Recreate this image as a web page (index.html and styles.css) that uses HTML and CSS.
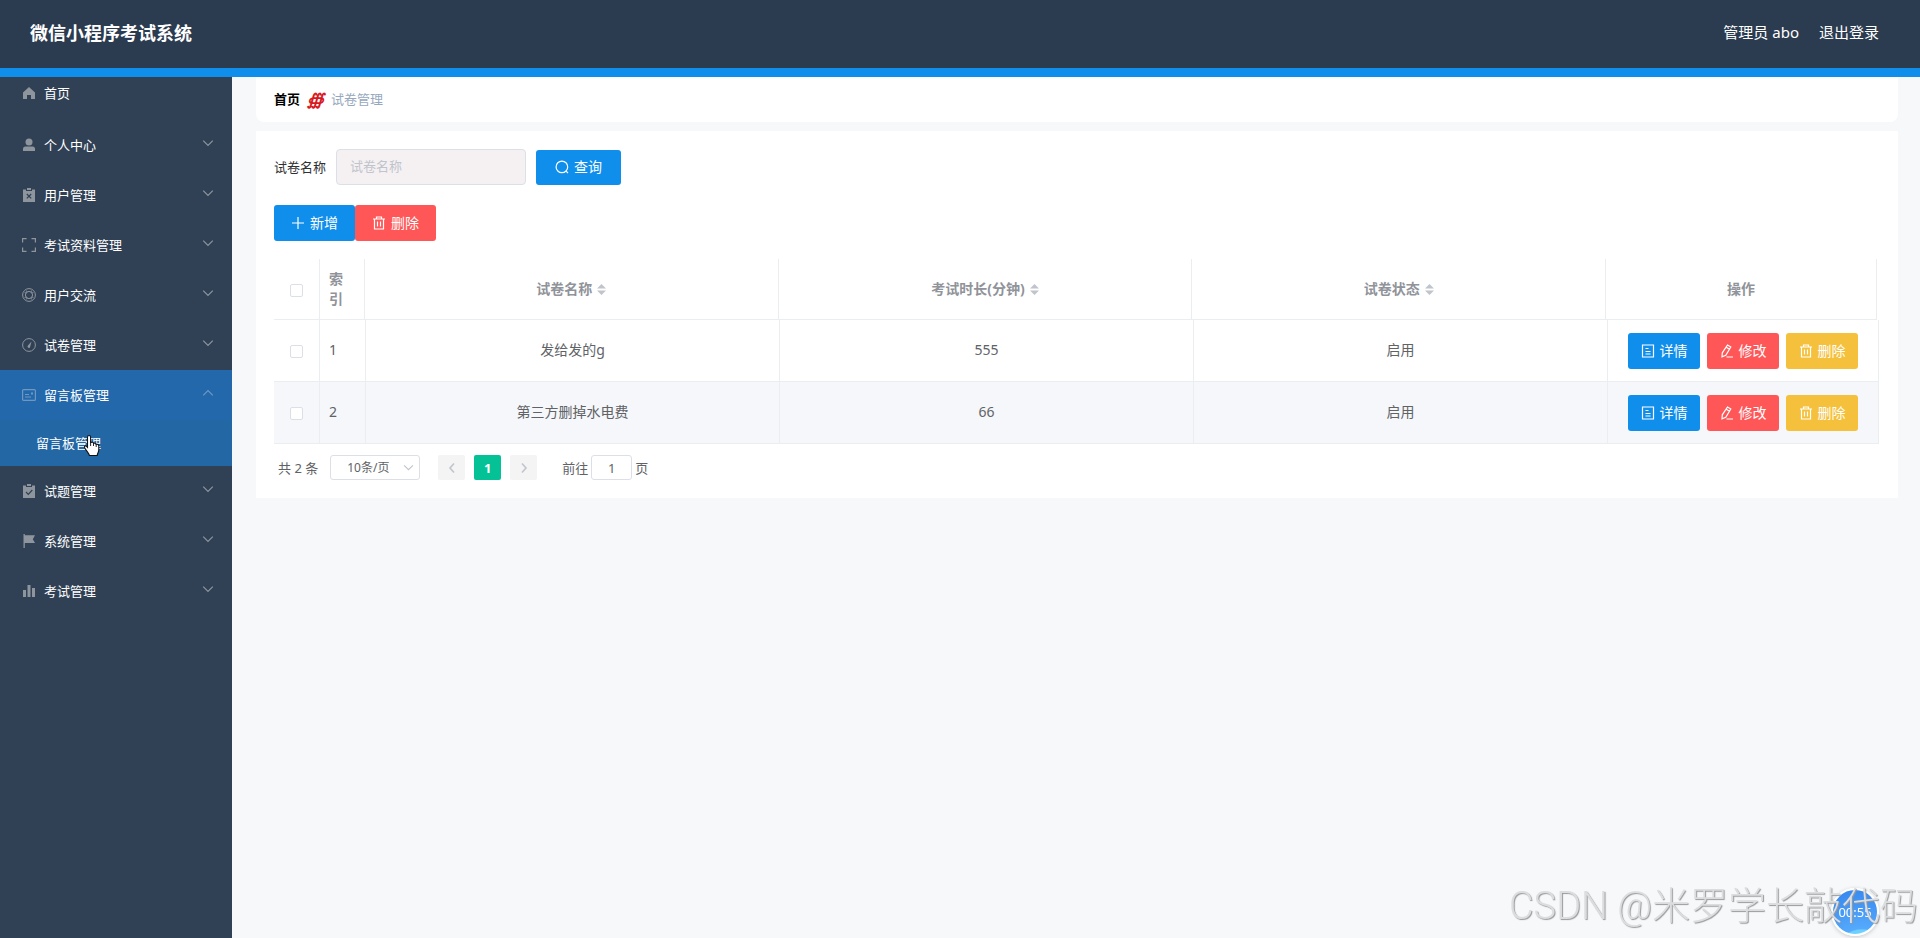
FILE: index.html
```html
<!DOCTYPE html>
<html lang="zh-CN">
<head>
<meta charset="utf-8">
<title>微信小程序考试系统</title>
<link rel="stylesheet" href="styles.css">
</head>
<body>
<svg class="sprite" aria-hidden="true">
  <symbol id="down" viewBox="0 0 10 10"><path d="M1 3l4 4 4-4" fill="none" stroke="currentColor"/></symbol>
  <symbol id="up" viewBox="0 0 10 10"><path d="M1 7l4-4 4 4" fill="none" stroke="currentColor"/></symbol>
  <symbol id="trash" viewBox="0 0 14 14"><path d="M1 3h12M4.500 3V1h5v2M2.500 3v10h9V3M5.500 5.500v5M8.500 5.500v5" fill="none" stroke="currentColor" stroke-width="1.200"/></symbol>
  <symbol id="doc" viewBox="0 0 14 14"><path d="M1.500 1h11v12h-11zM4.500 4.500h3M4.500 7.500h5M4.500 10h5" fill="none" stroke="currentColor" stroke-width="1.200"/></symbol>
  <symbol id="edit" viewBox="0 0 14 14"><path d="M7.500 1l3.300 2-5 8.300-3.800 1.500.3-4zM6.300 3.200l3.200 2M6.500 13H13" fill="none" stroke="currentColor" stroke-width="1.200"/></symbol>
</svg>
<header class="topbar">
  <h1 class="brand">微信小程序考试系统</h1>
  <div class="account"><span>管理员 abo</span><a class="logout" href="#">退出登录</a></div>
</header>
<div class="layout">
  <nav class="sidebar">
    <a class="item home" href="#"><svg class="ico" viewBox="0 0 14 14"><path d="M7 1l6 5.500V13H9V9H5v4H1V6.500z" fill="currentColor"/></svg><span>首页</span></a>
    <a class="item" href="#"><svg class="ico" viewBox="0 0 14 14"><circle cx="7" cy="4" r="3.500" fill="currentColor"/><path d="M1 13v-2q0-2.500 2.500-2.500h7Q13 8.500 13 11v2z" fill="currentColor"/></svg><span>个人中心</span><svg class="arrow"><use href="#down"/></svg></a>
    <a class="item" href="#"><svg class="ico" viewBox="0 0 14 14"><path d="M1 1.500h3V3h6V1.500h3V14H1zM5 0h4v2H5z" fill="currentColor"/><path d="M4.800 6l4.400 4.400M9.200 6l-4.400 4.400" stroke="#304156" stroke-width="1.200"/></svg><span>用户管理</span><svg class="arrow"><use href="#down"/></svg></a>
    <a class="item" href="#"><svg class="ico" viewBox="0 0 14 14"><path d="M.6 4.500V.6h4M9.500.6h3.900v3.900M13.400 9.500v3.900H9.500M4.500 13.400H.6V9.500" fill="none" stroke="currentColor" stroke-width="1.200"/></svg><span>考试资料管理</span><svg class="arrow"><use href="#down"/></svg></a>
    <a class="item" href="#"><svg class="ico" viewBox="0 0 14 14"><g fill="none" stroke="currentColor"><circle cx="7" cy="7" r="6.400"/><circle cx="7" cy="7" r="3.600"/><path d="M2.500 4.500l2 .5M4.500 2.500l.5 2M11.500 4.500l-2 .5M9.500 2.500l-.5 2M2.500 9.500l2-.5M4.500 11.500l.5-2M11.500 9.500l-2-.5M9.500 11.500l-.5-2" stroke-width=".8"/></g></svg><span>用户交流</span><svg class="arrow"><use href="#down"/></svg></a>
    <a class="item" href="#"><svg class="ico" viewBox="0 0 14 14"><circle cx="7" cy="7" r="6.400" fill="none" stroke="currentColor"/><path d="M9.500 3.500L8.200 8.600a1.300 1.300 0 1 1-2.200-1z" fill="currentColor"/></svg><span>试卷管理</span><svg class="arrow"><use href="#down"/></svg></a>
    <div class="open">
      <a class="item" href="#"><svg class="ico" viewBox="0 0 14 14"><rect x=".6" y="1.600" width="12.800" height="10.800" rx="1" fill="none" stroke="currentColor" stroke-width="1.200"/><path d="M3 6.500h4M3 9h6" stroke="currentColor"/><rect x="9" y="4.500" width="2" height="2" fill="currentColor"/></svg><span>留言板管理</span><svg class="arrow"><use href="#up"/></svg></a>
      <a class="subitem" href="#">留言板管理</a>
      <svg class="cursor" viewBox="0 0 17 23"><path d="M6 1.500c1.100 0 1.600.8 1.600 1.700v5.300c2-.8 2.800 0 3 .8 1.500-.5 2.300.1 2.500 1 1.700-.4 2.700.4 2.700 1.800v4c0 2-1.600 3.200-1.600 5.400H6.400c-.4-2.200-3-4.500-4.800-7.800-.7-1.500 1-2.400 2-1.300l.9 1V3.200c0-1 .5-1.700 1.500-1.700z" fill="#fff" stroke="#111" stroke-width="1.100"/><path d="M7.600 8v4M10.500 9v3M13.200 10v3" stroke="#111" stroke-width=".9"/></svg>
    </div>
    <a class="item" href="#"><svg class="ico" viewBox="0 0 14 14"><path d="M1 1.500h3V3h6V1.500h3V14H1zM5 0h4v2H5z" fill="currentColor"/><path d="M4 8l2.300 2.300L10.300 6" fill="none" stroke="#304156" stroke-width="1.200"/></svg><span>试题管理</span><svg class="arrow"><use href="#down"/></svg></a>
    <a class="item" href="#"><svg class="ico" viewBox="0 0 14 14"><path d="M1.500 0h1.300v1.300H13L10.800 5.200 13 9H2.800v5H1.500z" fill="currentColor"/></svg><span>系统管理</span><svg class="arrow"><use href="#down"/></svg></a>
    <a class="item" href="#"><svg class="ico" viewBox="0 0 14 14"><path d="M1 6h3v7H1zM5.500 1h3v12h-3zM10 4h3v9h-3z" fill="currentColor"/></svg><span>考试管理</span><svg class="arrow"><use href="#down"/></svg></a>
  </nav>
  <main class="content">
    <div class="crumbs"><a class="crumb" href="#">首页</a><span class="sep">∰</span><span class="here">试卷管理</span></div>
    <section class="card">
      <form class="search">
        <label for="paper">试卷名称</label>
        <input id="paper" class="field" type="text" placeholder="试卷名称">
        <button class="btn query" type="button"><svg class="bico" viewBox="0 0 14 14"><path d="M10.600 10.600L13 13M12.700 6.900a5.800 5.800 0 1 1-11.600 0 5.800 5.800 0 0 1 11.600 0z" fill="none" stroke="currentColor" stroke-width="1.200"/></svg>查询</button>
      </form>
      <div class="tools">
        <button class="btn add" type="button"><svg class="bico" viewBox="0 0 14 14"><path d="M1 7h12M7 1v12" stroke="currentColor" stroke-width="1.200"/></svg>新增</button>
        <button class="btn add red" type="button"><svg class="bico"><use href="#trash"/></svg>删除</button>
      </div>
      <table class="grid head">
        <colgroup><col class="c-check"><col class="c-index"><col><col><col><col class="c-ops"></colgroup>
        <thead><tr>
          <th><input class="tick" type="checkbox" aria-label="全选"></th>
          <th class="idx">索引</th>
          <th>试卷名称<svg class="sort" viewBox="0 0 10 14"><path d="M5 1l5 5H0zM0 8h10l-5 5z" fill="currentColor"/></svg></th>
          <th>考试时长(分钟)<svg class="sort" viewBox="0 0 10 14"><path d="M5 1l5 5H0zM0 8h10l-5 5z" fill="currentColor"/></svg></th>
          <th>试卷状态<svg class="sort" viewBox="0 0 10 14"><path d="M5 1l5 5H0zM0 8h10l-5 5z" fill="currentColor"/></svg></th>
          <th>操作</th>
        </tr></thead>
      </table>
      <table class="grid body">
        <colgroup><col class="c-check"><col class="c-index"><col><col><col><col class="c-ops"></colgroup>
        <tbody>
          <tr><td class="pick"><input class="tick" type="checkbox" aria-label="选择 1"></td><td class="idx">1</td><td>发给发的g</td><td>555</td><td>启用</td>
            <td class="act"><div class="ops"><button class="btn" type="button"><svg class="bico"><use href="#doc"/></svg>详情</button><button class="btn red" type="button"><svg class="bico"><use href="#edit"/></svg>修改</button><button class="btn amber" type="button"><svg class="bico"><use href="#trash"/></svg>删除</button></div></td></tr>
          <tr class="striped"><td class="pick"><input class="tick" type="checkbox" aria-label="选择 2"></td><td class="idx">2</td><td>第三方删掉水电费</td><td>66</td><td>启用</td>
            <td class="act"><div class="ops"><button class="btn" type="button"><svg class="bico"><use href="#doc"/></svg>详情</button><button class="btn red" type="button"><svg class="bico"><use href="#edit"/></svg>修改</button><button class="btn amber" type="button"><svg class="bico"><use href="#trash"/></svg>删除</button></div></td></tr>
        </tbody>
      </table>
      <div class="pager">
        <span>共 2 条</span>
        <span class="sizes"><select class="size" aria-label="每页条数"><option>10条/页</option></select><svg class="caret"><use href="#down"/></svg></span>
        <div class="pages">
          <button class="page" type="button" aria-label="上一页" disabled><svg viewBox="0 0 10 12"><path d="M7 1.500L3 6l4 4.500" fill="none" stroke="currentColor" stroke-width="1.600"/></svg></button>
          <button class="page current" type="button">1</button>
          <button class="page" type="button" aria-label="下一页" disabled><svg viewBox="0 0 10 12"><path d="M3 1.500L7 6l-4 4.500" fill="none" stroke="currentColor" stroke-width="1.600"/></svg></button>
        </div>
        <label class="jump">前往<input class="goto" type="text" value="1">页</label>
      </div>
    </section>
  </main>
</div>
<div class="timer">00:55</div>
<div class="watermark">CSDN @米罗学长敲代码</div>
</body>
</html>
```
FILE: styles.css
```css
* { box-sizing: border-box; }
body {
  margin: 0;
  min-height: 100vh;
  display: flex;
  flex-direction: column;
  background: #f6f8fa;
  color: #606266;
  font: 14px/20px "Noto Sans", "Noto Sans CJK SC", sans-serif;
}
a { color: inherit; text-decoration: none; }
button, input, select { font: inherit; color: inherit; margin: 0; }
.sprite { display: none; }

.topbar {
  display: flex;
  justify-content: space-between;
  align-items: center;
  height: 77px;
  padding: 0 41px 3px 30px;
  background: #2b3b50;
  border-bottom: 9px solid #0f8eec;
  color: #fff;
}
.brand { margin: 0; font-size: 18px; line-height: 24px; }
.account { display: flex; gap: 20px; padding-bottom: 2px; font-size: 15px; }

.layout { flex: 1; display: flex; }
.sidebar { width: 232px; flex: none; background: #304156; color: #fff; font-size: 13px; }
.item {
  display: flex;
  align-items: center;
  height: 50px;
  padding: 0 18px 0 22px;
}
.home { height: 43px; padding-bottom: 11px; }
.ico { width: 14px; height: 14px; margin-right: 8px; color: #8f959d; }
.arrow { width: 12px; height: 12px; margin: 0 0 4px auto; color: #8f959d; }
.open { position: relative; background: #2468ac; }
.open .ico, .open .arrow { color: #6f97c0; }
.subitem { display: flex; align-items: center; height: 46px; padding-left: 36px; background: #2367a5; }
.cursor { position: absolute; left: 83px; top: 64px; width: 17px; height: 23px; }

.content { flex: 1; min-width: 0; padding: 0 22px 0 24px; }
.crumbs {
  display: flex;
  align-items: center;
  height: 45px;
  padding: 0 18px 2px;
  background: #fff;
  border-radius: 0 0 8px 8px;
  font-size: 13px;
}
.crumb { color: #000; font-weight: bold; }
.sep { margin: 0 7px; color: #d8191f; font-weight: bold; font-style: italic; font-size: 16px; }
.here { color: #97a8be; }
.card { margin-top: 9px; padding: 18px 19px 18px 18px; background: #fff; }

.search { display: flex; align-items: center; gap: 10px; color: #303133; font-size: 13px; }
.field {
  width: 190px;
  height: 36px;
  padding: 0 13px 2px;
  border: 1px solid #dcdfe6;
  border-radius: 4px;
  background: #f5f1f2;
}
.field::placeholder { color: #c0c4cc; }
.btn {
  display: flex;
  align-items: center;
  justify-content: center;
  gap: 5px;
  width: 72px;
  height: 36px;
  padding: 0;
  border: 0;
  border-radius: 3px;
  background: #0f8eec;
  color: #fff;
  font-size: 14px;
}
.query { width: 85px; height: 35px; }
.add { width: 81px; padding-bottom: 1px; }
.red { background: #ff5757; }
.amber { background: #f5c13c; }
.bico { width: 14px; height: 14px; }
.tools { display: flex; margin: 20px 0 18px; }

.grid { width: 100%; table-layout: fixed; border-collapse: separate; border-spacing: 0; text-align: center; }
.head { width: calc(100% - 2px); color: #909399; }
.c-check { width: 46px; }
.c-index { width: 46px; }
.head .c-index { width: 45px; }
.c-ops { width: 271px; }
.grid th, .grid td { padding: 0; border-right: 1px solid #ebeef0; border-bottom: 1px solid #ebeef0; }
.grid th { height: 61px; }
.grid td { height: 62px; padding-bottom: 2px; }
.grid .pick, .grid .act { padding-bottom: 0; }
.grid .idx { padding-left: 9px; padding-right: 10px; text-align: left; }
.striped { background: #f5f7fa; }
.tick {
  appearance: none;
  width: 13px;
  height: 13px;
  border: 1px solid #dcdfe6;
  border-radius: 2px;
  background: #fff;
  vertical-align: middle;
}
.sort { width: 9px; height: 13px; margin-left: 5px; vertical-align: -2px; color: #c0c4cc; }
.ops { display: flex; justify-content: center; gap: 7px; }

.pager { display: flex; align-items: center; margin-top: 11px; padding-left: 4px; font-size: 13px; }
.sizes { position: relative; margin: 0 18px 0 12px; }
.size {
  appearance: none;
  display: block;
  width: 90px;
  height: 25px;
  padding: 0 16px;
  border: 1px solid #dcdfe6;
  border-radius: 3px;
  background: #fff;
  font-size: 12px;
}
.caret { position: absolute; right: 6px; top: 7px; width: 11px; height: 11px; color: #c0c4cc; }
.pages { display: flex; gap: 9px; margin-right: 25px; }
.page {
  display: flex;
  align-items: center;
  justify-content: center;
  width: 27px;
  height: 25px;
  padding: 0;
  border: 0;
  border-radius: 2px;
  background: #f4f4f5;
  color: #c0c4cc;
}
.page svg { width: 10px; height: 12px; }
.current { background: #04c295; color: #fff; font-weight: bold; }
.jump { display: flex; align-items: center; gap: 3px; }
.goto { width: 41px; height: 25px; padding: 0; border: 1px solid #dcdfe6; border-radius: 3px; text-align: center; }

.timer {
  position: fixed;
  right: 41px;
  bottom: 2px;
  width: 48px;
  height: 48px;
  border: 2px solid #fff;
  border-radius: 50%;
  background: radial-gradient(circle at 65% 150%, #6fd0ff 0 36%, #55aafc 38%, #3585ee 100%);
  box-shadow: 0 1px 4px #0003;
  color: #fff;
  font-size: 13px;
  line-height: 44px;
  text-align: center;
}
.watermark {
  position: fixed;
  right: 2px;
  bottom: 4px;
  color: #dcdddf;
  font: 300 38px/56px Roboto, "Noto Sans CJK SC", sans-serif;
  text-shadow: 1px 1px 1px #999;
  white-space: nowrap;
}
```
